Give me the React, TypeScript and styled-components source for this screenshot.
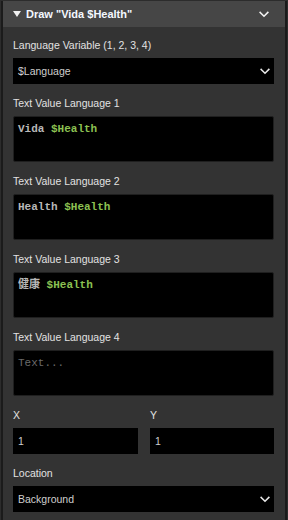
import React, { FC } from "react";
import styled, { createGlobalStyle } from "styled-components";

const GlobalStyle = createGlobalStyle`
  html, body {
    margin: 0;
    padding: 0;
    background: #2c2c2c;
  }
  body {
    font-family: "Liberation Sans", Arial, sans-serif;
  }
`;

const Frame = styled.div`
  padding: 1px 0 0 1px;
  width: 288px;
  height: 520px;
  box-sizing: border-box;
`;

const Panel = styled.section`
  width: 286px;
  height: 519px;
  box-sizing: border-box;
  border-left: 2px solid #1b1b1b;
  border-right: 2px solid #1b1b1b;
  background: #333333;
  overflow: hidden;
`;

const Header = styled.div`
  height: 26px;
  display: flex;
  align-items: center;
  padding: 0 16px 0 10px;
  background: #464646;
  color: #f4f8ff;
  font-size: 11px;
  font-weight: 700;
`;

const Caret = styled.span`
  width: 0;
  height: 0;
  border-left: 4px solid transparent;
  border-right: 4px solid transparent;
  border-top: 6px solid #f0f0f0;
  margin-right: 5px;
`;

const Title = styled.span`
  flex: 1;
  white-space: nowrap;
`;

const Body = styled.div`
  display: flex;
  flex-direction: column;
  gap: 11px;
  padding: 10px 11px 0 10px;
`;

const Field = styled.div`
  display: flex;
  flex-direction: column;
  gap: 5px;
  min-width: 0;
`;

const Row = styled.div`
  display: grid;
  grid-template-columns: 125px 124px;
  column-gap: 12px;
`;

const Label = styled.div`
  color: #e2e2e2;
  font-size: 10.5px;
  line-height: 16px;
  height: 16px;
  white-space: nowrap;
`;

const Control = styled.div`
  height: 26px;
  background: #000;
  display: flex;
  align-items: center;
  padding: 0 4px 0 5px;
  color: #cfcfcf;
  font-size: 10.5px;
  box-sizing: border-box;
`;

const SelectText = styled.span`
  flex: 1;
`;

const CodeBox = styled.div`
  height: 46px;
  background: #000;
  border: 1px solid #1f1f1f;
  border-radius: 2px;
  box-sizing: border-box;
  padding: 5px 4px;
  font-family: "Liberation Mono", "Noto Sans CJK SC", monospace;
  font-size: 11px;
  font-weight: 700;
  line-height: 15px;
  color: #b8b8b8;
`;

const Var = styled.span`
  color: #8cc152;
`;

const Placeholder = styled.span`
  color: #6a6a6a;
  font-weight: 400;
`;

const Chevron: FC<{ color?: string }> = ({ color = "#e8e8e8" }) => (
  <svg width="10" height="7" viewBox="0 0 10 7">
    <path
      d="M1.2 1.5 L5 5.2 L8.8 1.5"
      fill="none"
      stroke={color}
      strokeWidth="1.6"
      strokeLinecap="square"
    />
  </svg>
);

const Select: FC<{ value: string }> = ({ value }) => (
  <Control>
    <SelectText>{value}</SelectText>
    <Chevron />
  </Control>
);

const texts: { label: string; plain?: string }[] = [
  { label: "Text Value Language 1", plain: "Vida" },
  { label: "Text Value Language 2", plain: "Health" },
  { label: "Text Value Language 3", plain: "健康" },
  { label: "Text Value Language 4" },
];

export default function App() {
  return (
    <>
      <GlobalStyle />
      <Frame>
        <Panel>
          <Header>
            <Caret />
            <Title>Draw "Vida $Health"</Title>
            <Chevron color="#f4f4f4" />
          </Header>
          <Body>
            <Field>
              <Label>Language Variable (1, 2, 3, 4)</Label>
              <Select value="$Language" />
            </Field>
            {texts.map((t) => (
              <Field key={t.label}>
                <Label>{t.label}</Label>
                <CodeBox>
                  {t.plain ? (
                    <>
                      {t.plain} <Var>$Health</Var>
                    </>
                  ) : (
                    <Placeholder>Text...</Placeholder>
                  )}
                </CodeBox>
              </Field>
            ))}
            <Row>
              <Field>
                <Label>X</Label>
                <Control>1</Control>
              </Field>
              <Field>
                <Label>Y</Label>
                <Control>1</Control>
              </Field>
            </Row>
            <Field>
              <Label>Location</Label>
              <Select value="Background" />
            </Field>
          </Body>
        </Panel>
      </Frame>
    </>
  );
}
